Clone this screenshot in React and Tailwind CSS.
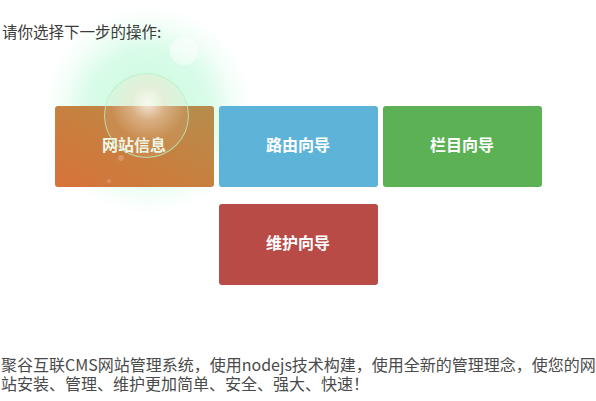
import React from 'react';

const buttons = [
    { label: '网站信息', className: 'bg-gradient-to-tr from-[#d8723a] via-[#c7803f] to-[#b58d4d] text-[#eef8e8]' },
    { label: '路由向导', className: 'bg-[#5eb4d8] text-white' },
    { label: '栏目向导', className: 'bg-[#5bb154] text-white' },
    { label: '维护向导', className: 'bg-[#b94b47] text-white' },
];

const App = () => {
    return (
        <div className="relative w-[596px] h-[401px] overflow-hidden bg-white font-['Noto_Sans_CJK_SC','Liberation_Sans',sans-serif] text-[#3a3a3a]">
            {/* soft green glow behind the first button */}
            <div className="pointer-events-none absolute left-[42px] top-[4px] h-[212px] w-[212px] rounded-full bg-[radial-gradient(circle,rgba(190,250,215,0.8)_0%,rgba(200,250,222,0.7)_40%,rgba(225,253,238,0.35)_58%,rgba(235,255,245,0)_70%)]" />

            <p className="relative pt-[22px] pl-[2px] text-[15.5px] leading-[18px]">请你选择下一步的操作:</p>

            {/* guide buttons */}
            <div className="relative mx-auto mt-[66px] flex w-[487px] flex-wrap justify-center gap-x-[5px] gap-y-[17px]">
                {buttons.map((b) => (
                    <button
                        key={b.label}
                        className={`flex h-[81px] w-[159px] items-center justify-center rounded-[3px] pb-[5px] text-[16px] font-bold ${b.className}`}
                    >
                        {b.label}
                    </button>
                ))}
            </div>

            <p className="relative mt-[70px] pl-[1px] text-[16px] leading-[19px] text-[#4a4a4a]">
                聚谷互联CMS网站管理系统，使用nodejs技术构建，使用全新的管理理念，使您的网站安装、管理、维护更加简单、安全、强大、快速！
            </p>

            {/* lens flare */}
            <div className="pointer-events-none absolute left-[104px] top-[73px] h-[85px] w-[85px] rounded-full border border-[#b5f0c5]/80 bg-[radial-gradient(circle_at_52%_35%,rgba(255,248,240,0.85)_0%,rgba(250,225,205,0.45)_25%,rgba(240,210,180,0.12)_55%,rgba(255,255,255,0.08)_75%)]" />
            <div className="pointer-events-none absolute left-[170px] top-[37px] h-[28px] w-[28px] rounded-full bg-white/50" />
            <div className="pointer-events-none absolute left-[118px] top-[155px] h-[6px] w-[6px] rounded-full bg-[#e0a078]/70" />
            <div className="pointer-events-none absolute left-[107px] top-[179px] h-[4px] w-[4px] rounded-full bg-[#e0a078]/60" />
        </div>
    );
};

export default App;
